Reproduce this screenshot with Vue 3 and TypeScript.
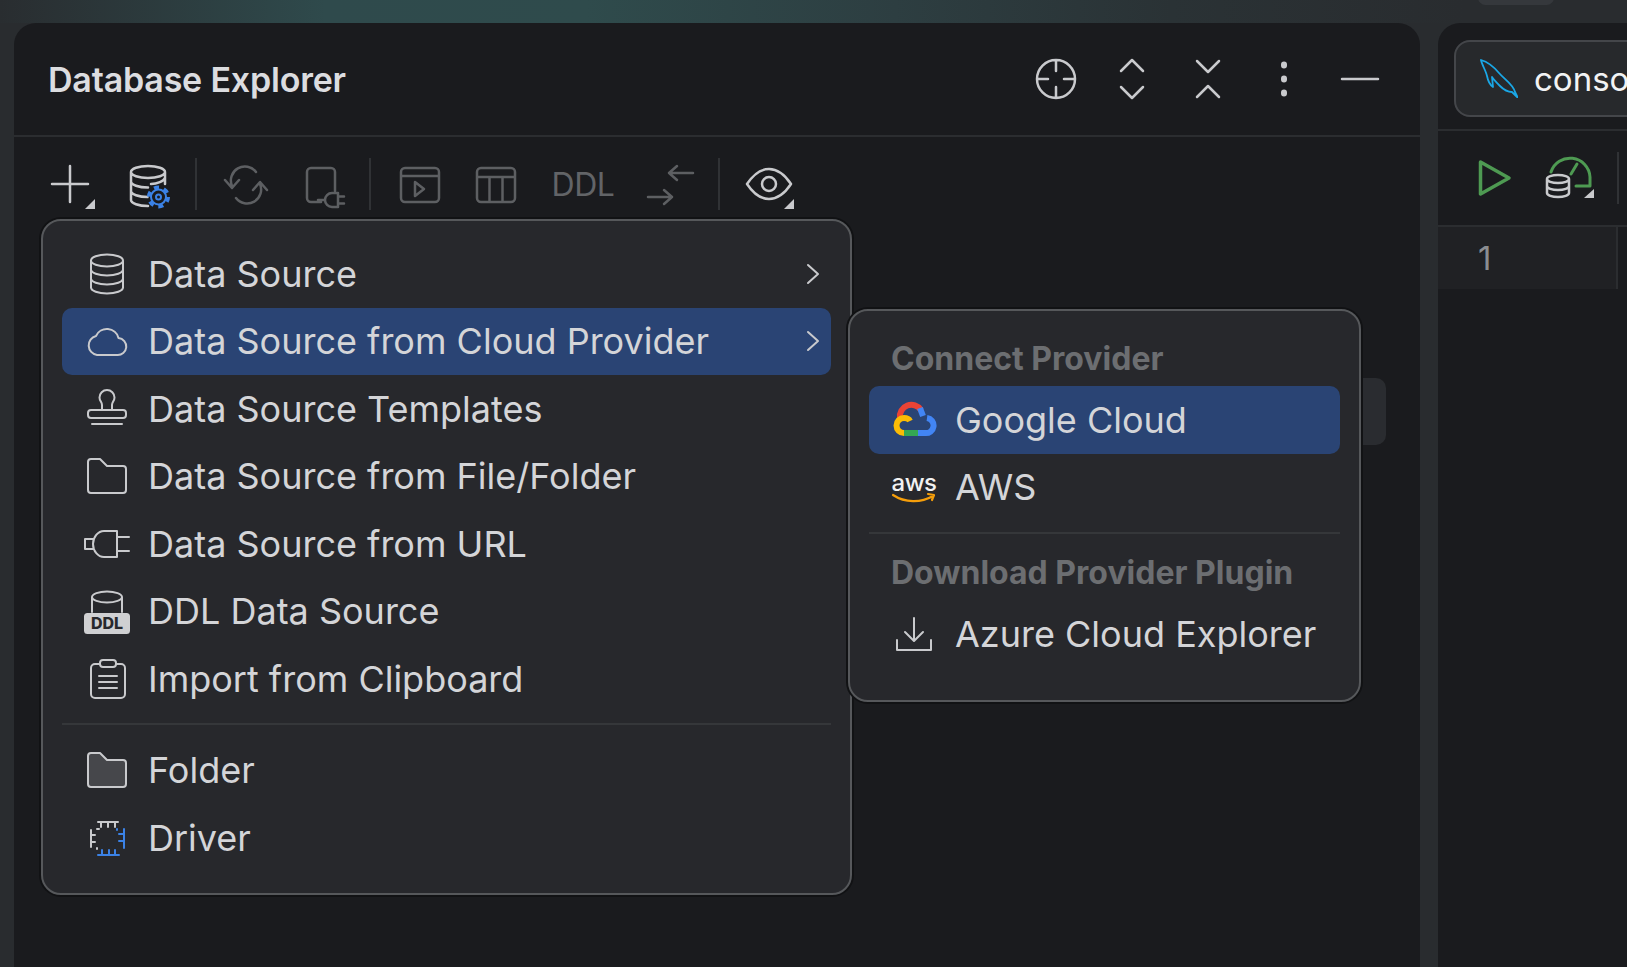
<template>
  <div class="window">
    <div class="top-strip"><span class="top-pill"></span></div>
    <div class="workspace">
      <section class="explorer">
        <header class="panel-head">
          <h1 class="panel-title">Database Explorer</h1>
          <div class="head-actions">
            <button v-for="a in headActions" :key="a" class="head-btn">
              <svg width="44" height="44" viewBox="0 0 44 44" class="ico">
                <path :d="headIcons[a]" />
              </svg>
            </button>
          </div>
        </header>

        <div class="toolbar">
          <div class="tool w80">
            <svg width="52" height="52" viewBox="0 0 52 52" class="ico"><path d="M26 8v36M8 26h36" /><path class="tri" d="M51 41v10H41z" /></svg>
          </div>
          <div class="tool w80">
            <svg width="52" height="52" viewBox="0 0 52 52" class="ico">
              <path d="M7 14a17 6 0 1 0 34 0a17 6 0 1 0-34 0M7 14v28c0 3.3 7.6 6 17 6M7 23.500c0 3.300 7.600 6 17 6M7 33c0 3.300 7.600 6 17 6M41 14v12M41 20c-1 3-8 6-14 6" />
              <circle cx="34.500" cy="39" r="10" class="gear-back" />
              <circle cx="34.500" cy="39" r="9.500" class="gear-teeth" />
              <circle cx="34.500" cy="39" r="7.500" class="gear-ring" />
              <circle cx="34.500" cy="39" r="2.500" class="gear-ring" />
            </svg>
          </div>
          <span class="tool-sep s12"></span>
          <div class="tool w88">
            <svg width="52" height="52" viewBox="0 0 52 52" class="ico off"><path d="M5 22l7 8 7-8M12 28a14 14 0 0 1 24-14M33 32l7-8 7 8M40 26a14 14 0 0 1-24 14" /></svg>
          </div>
          <div class="tool w70">
            <svg width="52" height="52" viewBox="0 0 52 52" class="ico off"><path d="M22 44H12a4 4 0 0 1-4-4V14a4 4 0 0 1 4-4h20a4 4 0 0 1 4 4v19M39 35h-6a7 7 0 0 0 0 14h6zM39 38.500h6M39 45.500h6M19 42h7" /></svg>
          </div>
          <span class="tool-sep s20"></span>
          <div class="tool w80">
            <svg width="52" height="52" viewBox="0 0 52 52" class="ico off"><path d="M11 10h30a4 4 0 0 1 4 4v26a4 4 0 0 1-4 4H11a4 4 0 0 1-4-4V14a4 4 0 0 1 4-4zM7 18h38M21 24l9 7-9 7z" /></svg>
          </div>
          <div class="tool w72">
            <svg width="52" height="52" viewBox="0 0 52 52" class="ico off"><path d="M11 10h30a4 4 0 0 1 4 4v26a4 4 0 0 1-4 4H11a4 4 0 0 1-4-4V14a4 4 0 0 1 4-4zM7 19h38M19.500 19v25M32.500 19v25" /></svg>
          </div>
          <div class="tool w102 ddl-label">DDL</div>
          <div class="tool w72">
            <svg width="52" height="52" viewBox="0 0 52 52" class="ico off"><path d="M49 15H25M33 8l-8 7 8 7M4 39h24M20 32l8 7-8 7" /></svg>
          </div>
          <span class="tool-sep s26"></span>
          <div class="tool w74">
            <svg width="52" height="52" viewBox="0 0 52 52" class="ico"><path d="M4 26C12 14 20 11 26 11s14 3 22 15c-8 12-16 15-22 15S12 38 4 26z" /><circle cx="26" cy="26" r="7" /><path class="tri" d="M51 41v10H41z" /></svg>
          </div>
        </div>

        <span class="tree-row-edge"></span>

        <div class="menu main-menu">
          <template v-for="(item, i) in mainItems" :key="item.label">
            <div v-if="i === 7" class="menu-sep"></div>
            <div class="menu-row" :class="{ active: item.active }">
              <span class="menu-icon">
                <svg v-if="item.icon === 'ddl'" width="46" height="46" viewBox="0 0 46 46" class="ico thin">
                  <path d="M8 9a15 5.500 0 1 0 30 0a15 5.500 0 1 0-30 0M8 9v15M38 9v15" />
                  <rect x="1" y="26" width="44" height="19" rx="2.500" class="badge" />
                  <text x="23" y="41" class="badge-text">DDL</text>
                </svg>
                <svg v-else-if="item.icon === 'driver'" width="46" height="46" viewBox="0 0 46 46" class="ico thin">
                  <path d="M14 7h20M17 7v5M24 7v5M31 7v5M7 15v17M7 20h4M7 27h4M13 14h2M13 33v1" />
                  <path class="blue" d="M40 14v19M40 19h-5M40 26h-5M14 40h21M18 40v-5M25 40v-5M31 40v-5M33 14v1" />
                </svg>
                <svg v-else width="46" height="46" viewBox="0 0 46 46" class="ico thin" :class="{ filled: item.icon === 'folderFill' }">
                  <path :d="menuIcons[item.icon]" />
                </svg>
              </span>
              <span class="menu-label">{{ item.label }}</span>
              <svg v-if="item.arrow" class="chev ico thin" width="14" height="22" viewBox="0 0 14 22"><path d="M2 2l10 9-10 9" /></svg>
            </div>
          </template>
        </div>

        <div class="menu sub-menu">
          <div class="menu-head">Connect Provider</div>
          <div class="menu-row active">
            <span class="menu-icon">
              <svg width="46" height="46" viewBox="0 0 46 46" class="gcloud">
                <path stroke="#ea4335" d="M9 21a11.500 11.500 0 0 1 21-8" />
                <path stroke="#4285f4" d="M29 11l3 8M27 36h7a7.500 7.500 0 0 0 2-15" />
                <path stroke="#34a853" d="M13 36h14" />
                <path stroke="#fbbc05" d="M13 36a7.500 7.500 0 0 1 0-15c2.500 0 5 1 6 3" />
              </svg>
            </span>
            <span class="menu-label">Google Cloud</span>
          </div>
          <div class="menu-row">
            <span class="menu-icon">
              <svg width="46" height="46" viewBox="0 0 46 46">
                <text x="23" y="27" class="aws-text">aws</text>
                <path class="aws-smile" d="M2 31c12 8 28 8 40 1M37 30l6 1-2 5" />
              </svg>
            </span>
            <span class="menu-label">AWS</span>
          </div>
          <div class="menu-sep sub-sep"></div>
          <div class="menu-head">Download Provider Plugin</div>
          <div class="menu-row">
            <span class="menu-icon">
              <svg width="46" height="46" viewBox="0 0 46 46" class="ico thin"><path d="M23 7v22M14 21l9 9 9-9M6 29v10h34V29" /></svg>
            </span>
            <span class="menu-label">Azure Cloud Explorer</span>
          </div>
        </div>
      </section>

      <section class="editor">
        <div class="tab-row">
          <div class="tab">
            <svg width="38" height="39" viewBox="0 0 38 39" class="dolphin"><path d="M1 1c7 2 13 7 18 13 6 7 14 11 16 19l3 6-6-6c-5 0-8-2-12-6-3-3-6-6-8-9l1 10c-3-2-5-6-6-11C6 12 2 6 1 1z" /></svg>
            <span class="tab-name">console</span>
          </div>
        </div>
        <div class="run-row">
          <svg width="34" height="38" viewBox="0 0 34 38" class="run-play"><path d="M2.500 3L31 19 2.500 35z" /></svg>
          <svg width="56" height="52" viewBox="0 0 56 52" class="gauge">
            <path class="green" d="M9 20a20 20 0 0 1 39 5v9H34M29 22l6-10" />
            <path class="db" d="M5 27a11 4 0 1 0 22 0a11 4 0 1 0-22 0M5 27v14c0 2.200 5 4 11 4s11-1.800 11-4V27M5 34c0 2.200 5 4 11 4s11-1.800 11-4" />
            <path class="tri" d="M52 37v9H42z" />
          </svg>
          <span class="run-sep"></span>
        </div>
        <div class="gutter-row">
          <div class="gutter"><span class="line-no">1</span></div>
        </div>
      </section>
    </div>
  </div>
</template>

<script setup lang="ts">
const headActions = ['target', 'expand', 'collapse', 'more', 'hide']

const headIcons: Record<string, string> = {
  target: 'M3 22a19 19 0 1 0 38 0a19 19 0 1 0-38 0M22 3v11M22 30v11M3 22h11M30 22h11',
  expand: 'M11 14L22 3l11 11M11 30l11 11 11-11',
  collapse: 'M11 4l11 11L33 4M11 40l11-11 11 11',
  more: 'M22 7.500v1M22 21.500v1M22 35.500v1',
  hide: 'M4 22h36',
}

const folder = 'M4 9a3 3 0 0 1 3-3h9l7 7h16a3 3 0 0 1 3 3v21a3 3 0 0 1-3 3H7a3 3 0 0 1-3-3z'

const menuIcons: Record<string, string> = {
  db: 'M7 9.500a16 6 0 1 0 32 0a16 6 0 1 0-32 0M7 9.500v27c0 3.300 7.200 6 16 6s16-2.700 16-6v-27M7 18.500c0 3.300 7.200 6 16 6s16-2.700 16-6M7 27.500c0 3.300 7.200 6 16 6s16-2.700 16-6',
  cloud: 'M13 37h20a8.500 8.500 0 0 0 1.500-17A12 12 0 0 0 12 18a9.700 9.700 0 0 0 1 19z',
  stamp: 'M18 24v-5c0-3-2.500-4-2.500-7.500a7.500 7.500 0 0 1 15 0c0 3.500-2.500 4.500-2.500 7.500v5M7 24h32a3 3 0 0 1 3 3v2a3 3 0 0 1-3 3H7a3 3 0 0 1-3-3v-2a3 3 0 0 1 3-3zM8 38h30',
  folder,
  folderFill: folder,
  plug: 'M33 10H20C14 10 9 16 9 23s5 13 11 13h13zM9 18H1v10h8M33 16h12M33 30h12',
  clipboard: 'M16 8h-5a4 4 0 0 0-4 4v26a4 4 0 0 0 4 4h26a4 4 0 0 0 4-4V12a4 4 0 0 0-4-4h-5M19 4h10a3 3 0 0 1 3 3v1a3 3 0 0 1-3 3H19a3 3 0 0 1-3-3V7a3 3 0 0 1 3-3zM15 20h18M15 26h18M15 32h18',
}

interface MenuItem {
  label: string
  icon: string
  arrow?: boolean
  active?: boolean
}

const mainItems: MenuItem[] = [
  { label: 'Data Source', icon: 'db', arrow: true },
  { label: 'Data Source from Cloud Provider', icon: 'cloud', arrow: true, active: true },
  { label: 'Data Source Templates', icon: 'stamp' },
  { label: 'Data Source from File/Folder', icon: 'folder' },
  { label: 'Data Source from URL', icon: 'plug' },
  { label: 'DDL Data Source', icon: 'ddl' },
  { label: 'Import from Clipboard', icon: 'clipboard' },
  { label: 'Folder', icon: 'folderFill' },
  { label: 'Driver', icon: 'driver' },
]
</script>

<style>
html, body { margin: 0; background: #292c2f; overflow: hidden; }
</style>

<style scoped>
.window { width: 1627px; height: 967px; overflow: hidden; display: flex; flex-direction: column; font-family: Inter, "Noto Sans", sans-serif; color: #d4d5d8; background: #292c2f; }
.top-strip { position: relative; height: 23px; flex-shrink: 0; background: linear-gradient(90deg, #292d30 0%, #2f4a4c 20%, #2f4b4c 36%, #2d3e41 55%, #2a3235 72%, #292c2f 90%); }
.top-pill { position: absolute; left: 1478px; top: -10px; width: 76px; height: 15px; border-radius: 8px; background: #35383c; }
.workspace { flex: 1; display: flex; gap: 18px; padding-left: 14px; min-height: 0; }

.explorer { position: relative; width: 1406px; flex-shrink: 0; background: #1a1b1e; border-radius: 22px 22px 0 0; }
.panel-head { height: 112px; display: flex; align-items: center; justify-content: space-between; padding: 0 22px 0 34px; border-bottom: 2px solid #2b2d30; }
.panel-title { margin: 0; font-size: 34px; font-weight: 600; letter-spacing: -0.2px; color: #dcdde0; }
.head-actions { display: flex; }
.head-btn { width: 76px; height: 44px; display: flex; align-items: center; justify-content: center; padding: 0; background: none; border: 0; }

.ico { fill: none; stroke: #c9cacd; stroke-width: 2.500; stroke-linecap: round; stroke-linejoin: round; overflow: visible; }
.ico.thin { stroke-width: 2; }
.ico.off { stroke: #5d5f62; }
.ico .tri, .tri { fill: #c9cacd; stroke: none; }
.ico.filled { fill: #46474b; }
.head-btn:nth-child(4) .ico { stroke-width: 6; }

.toolbar { height: 94px; display: flex; align-items: center; padding-left: 16px; }
.tool { height: 52px; display: flex; align-items: center; justify-content: center; flex-shrink: 0; }
.w70 { width: 70px; }
.w72 { width: 72px; }
.w74 { width: 74px; }
.w80 { width: 80px; }
.w88 { width: 88px; }
.w102 { width: 102px; }
.tool-sep { height: 52px; flex-shrink: 0; background: linear-gradient(#303235, #303235) center / 2px 100% no-repeat; }
.s12 { width: 12px; }
.s20 { width: 20px; }
.s26 { width: 26px; }
.ddl-label { font-size: 32px; letter-spacing: -0.5px; color: #626467; }
.gear-back { fill: #1a1b1e; stroke: none; }
.gear-teeth { stroke: #3b82e6; stroke-width: 4; stroke-dasharray: 5 5; stroke-linecap: butt; }
.gear-ring { stroke: #3b82e6; stroke-width: 2; }

.tree-row-edge { position: absolute; left: 1270px; top: 355px; width: 102px; height: 67px; border-radius: 10px; background: #2a2c30; }

.menu { position: absolute; box-sizing: border-box; background: #27282c; border: 2px solid #56585b; box-shadow: 0 0 0 2px #111214; }
.main-menu { left: 27px; top: 196px; width: 811px; height: 676px; padding: 19px 19px; border-radius: 20px; }
.sub-menu { left: 834px; top: 286px; width: 513px; height: 393px; padding: 19px 19px; border-radius: 20px; }
.menu-row { height: 67.500px; display: flex; align-items: center; padding-left: 22px; border-radius: 10px; font-size: 36px; }
.menu-row.active { background: #2a4474; }
.menu-icon { width: 46px; height: 46px; flex-shrink: 0; margin-right: 18px; }
.menu-icon svg { display: block; }
.menu-label { flex: 1; white-space: nowrap; }
.chev { margin-right: 11px; flex-shrink: 0; }
.menu-sep { height: 2px; margin: 10px 0 12px; background: #35373a; }
.sub-sep { margin: 11px 0 10px; }
.menu-head { height: 56px; padding-left: 22px; display: flex; align-items: center; font-size: 32px; font-weight: 700; color: #6c6e71; }
.badge { fill: #cfd0d2; stroke: #cfd0d2; }
.badge-text { font-family: Inter, sans-serif; font-size: 16px; font-weight: 800; fill: #27282c; stroke: none; text-anchor: middle; }
.blue { stroke: #3b82e6; }
.gcloud { fill: none; stroke-width: 6; }
.aws-text { font-family: Inter, sans-serif; font-size: 24px; font-weight: 500; fill: #f2f2f2; text-anchor: middle; letter-spacing: -0.5px; }
.aws-smile { fill: none; stroke: #f59e0b; stroke-width: 2.200; stroke-linecap: round; stroke-linejoin: round; }

.editor { flex: 1; min-width: 0; background: #1a1b1e; border-radius: 22px 0 0 0; display: flex; flex-direction: column; }
.tab-row { height: 108px; flex-shrink: 0; box-sizing: border-box; padding: 17px 0 0 16px; border-bottom: 2px solid #2b2d30; overflow: hidden; }
.tab { box-sizing: border-box; width: 320px; height: 77px; display: flex; align-items: center; gap: 16px; padding-left: 24px; background: #27292c; border: 2px solid #44464a; border-radius: 16px; }
.tab-name { font-size: 33px; color: #f2f3f4; }
.dolphin { fill: none; stroke: #1aa7e6; stroke-width: 1.800; stroke-linejoin: round; flex-shrink: 0; }
.run-row { height: 96px; flex-shrink: 0; box-sizing: border-box; display: flex; align-items: center; padding-left: 40px; border-bottom: 2px solid #2b2d30; }
.run-play { fill: none; stroke: #4e9a52; stroke-width: 3.500; stroke-linejoin: round; flex-shrink: 0; }
.gauge { margin-left: 30px; flex-shrink: 0; fill: none; stroke-width: 3; stroke-linecap: round; stroke-linejoin: round; }
.gauge .green { stroke: #4e9a52; }
.gauge .db { stroke: #c9cacd; stroke-width: 2.500; }
.run-sep { width: 2px; height: 52px; margin-left: 19px; background: #303235; flex-shrink: 0; }
.gutter-row { flex: 1; display: flex; min-height: 0; }
.gutter { box-sizing: border-box; width: 180px; height: 62px; padding-left: 40px; display: flex; align-items: center; background: #202124; border-right: 2px solid #2b2d30; }
.line-no { font-size: 33px; color: #8b8d91; }
</style>
